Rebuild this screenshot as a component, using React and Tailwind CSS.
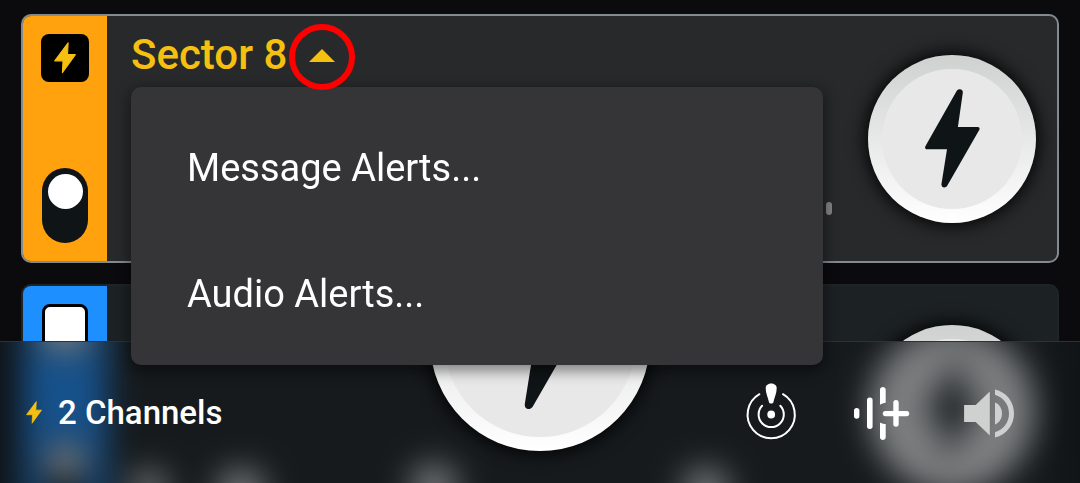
import React, { useState } from 'react';
import clsx from 'clsx';

const BoltIcon = ({ className }) => (
  <svg viewBox="0 0 21 30" className={className} fill="currentColor" stroke="currentColor" strokeWidth="1" strokeLinejoin="round" aria-hidden="true">
    <path d="M13.5 .8 L12.9 12 H20.4 L8 29.2 L8.6 18 H0.7 Z" />
  </svg>
);

const TalkBolt = ({ className }) => (
  <svg viewBox="0 0 55 99" className={className} fill="currentColor" aria-hidden="true">
    <path d="M31.5 2.2 C33.2 -.6 38.2 -.5 37.8 3.8 L32.9 38 H52.8 C54.6 38 55 39.6 54.2 41 L22.5 96.2 C20.8 99.6 16 99.2 16.5 94.8 L22 60.2 H2 C.2 60.2 -.4 58.6 .5 57 Z" />
  </svg>
);

const LocateIcon = () => (
  <svg viewBox="0 0 56 56" className="size-14 overflow-visible" fill="none" stroke="currentColor" strokeWidth="2" strokeLinecap="round" aria-hidden="true">
    <path d="M14.4 10.2 A23.6 23.6 0 1 0 38 10.2" />
    <path d="M17.1 21.8 A12.6 12.6 0 1 0 35.3 21.8" />
    <circle cx="26.2" cy="30.5" r="3.9" fill="currentColor" stroke="none" />
    <path stroke="none" fill="currentColor" d="M20.7 4.2 C20.7 -2 31.7 -2 31.7 4.2 C31.7 9 29.3 14 28.3 18.4 C28 19.8 24.4 19.8 24.1 18.4 C23.1 14 20.7 9 20.7 4.2 Z" />
  </svg>
);

const AddStreamIcon = () => (
  <svg viewBox="0 0 56 56" className="size-14" fill="currentColor" aria-hidden="true">
    <rect x="0" y="24" width="5.4" height="10.8" rx="2.7" />
    <rect x="13" y="13.6" width="5.6" height="31.4" rx="2.7" />
    <path d="M26 5.8 C26 2.2 31.7 2.2 31.7 5.8 V18.8 C29.4 19 27.8 19.6 26 20.8 Z" />
    <path d="M26 38.4 C27.8 39.4 29.4 39.8 31.7 40 V53.2 C31.7 56.9 26 56.9 26 53.2 Z" />
    <rect x="28.8" y="27" width="26.4" height="5.2" rx="2.6" />
    <rect x="39.3" y="16" width="5.4" height="26.8" rx="2.7" />
  </svg>
);

const VolumeIcon = () => (
  <svg viewBox="0 0 56 56" className="size-14" fill="currentColor" aria-hidden="true">
    <path d="M1.1 21 H12.7 L26.8 7.6 V51.4 L12.7 38 H1.1 Z" />
    <path d="M32 18.6 C36.6 20.4 39 24.8 39 29.6 C39 34.4 36.6 38.6 32 40.6 Z" />
    <path d="M32 5.6 C43.4 8 51 18 51 29.5 C51 41 43.4 51 32 53.4 V48.2 C40.4 45.8 46 38.4 46 29.5 C46 20.6 40.4 13.2 32 10.8 Z" />
  </svg>
);

// level dots under the second channel's name
const LEVELS = [
  { cx: 18, cy: 30, r: 19 },
  { cx: 110, cy: 34, r: 25 },
  { cx: 303, cy: 28, r: 24 },
  { cx: 575, cy: 32, r: 24 },
];

function TalkButton({ large = false, label })
{
  return (
    <button
      aria-label={label}
      className={clsx(
        'shrink-0 rounded-full bg-linear-to-b from-[#cfd1d0] to-white p-[14px] shadow-[0_0_18px_2px_#000000]',
        large ? 'size-[220px]' : 'size-[168px]'
      )}
    >
      <span className="flex size-full items-center justify-center rounded-full bg-[#e8e8e8] text-[#0f1416]">
        <TalkBolt className={large ? 'w-[76px]' : 'w-[55px]'} />
      </span>
    </button>
  );
}

function Toggle({ label })
{
  return (
    <label className="block h-[75px] w-[46px] rounded-full bg-[#0f1416] pt-[6px]">
      <input type="checkbox" defaultChecked aria-label={label} className="mx-auto block size-[35px] appearance-none rounded-full bg-white" />
    </label>
  );
}

function AlertsMenu()
{
  return (
    <div role="menu" className="absolute top-[71px] right-[9px] left-0 z-20 rounded-[10px] bg-[#353537] pt-[18px] pb-2 shadow-[0_4px_14px_2px_rgba(0,0,0,0.45)]">
      {['Message Alerts...', 'Audio Alerts...'].map((item) => (
        <button key={item} role="menuitem" className="block h-[126px] w-full px-14 text-left text-[38px] text-white">
          {item}
        </button>
      ))}
    </div>
  );
}

function SecondChannel()
{
  return (
    <section className="flex h-[249px] rounded-[10px] border-2 border-[#1f2527] bg-[#1c2123] pr-[21px]">
      <div className="flex w-[84px] shrink-0 flex-col items-center justify-between rounded-l-lg bg-[#1e8fff] pt-[18px] pb-[18px]">
        <div className="h-12 w-[46px] rounded-lg border-3 border-black bg-white" />
        <Toggle label="Channel 2" />
      </div>

      <div className="ml-6 flex flex-1 flex-col justify-end pb-3">
        <svg className="h-[60px] w-full" fill="#dcdcdc" aria-hidden="true">
          {LEVELS.map((dot) => <circle key={dot.cx} {...dot} />)}
        </svg>
      </div>

      <div className="ml-9 flex items-center">
        <TalkButton label="Talk on channel 2" />
      </div>
    </section>
  );
}

export default function App()
{
  const [open, setOpen] = useState(true);

  return (
    <div className="relative h-screen overflow-hidden bg-[#0b0b0e] font-['Roboto',sans-serif]">
      <main className="flex flex-col gap-[21px] px-[21px] pt-[14px]">
        <section className="flex h-[249px] rounded-[10px] border-2 border-[#848b90] bg-[#28292b] pr-[21px]">
          <div className="flex w-[84px] shrink-0 flex-col items-center justify-between rounded-l-lg bg-[#ffa20d] pt-[18px] pb-[18px]">
            <div className="flex size-12 items-center justify-center rounded-lg bg-black text-[#f6c011]">
              <BoltIcon className="w-[22px]" />
            </div>
            <Toggle label="Sector 8" />
          </div>

          <div className="relative ml-6 flex-1">
            <button
              onClick={() => setOpen(!open)}
              aria-expanded={open}
              className="mt-2 flex items-center text-[42px] leading-none font-medium text-[#f6c011]"
            >
              <span className="w-[158px] pb-1 text-left whitespace-nowrap">Sector 8</span>
              <span className="relative z-30 flex size-[66px] items-center justify-center rounded-full border-[6px] border-[#fe0000] pb-1">
                <svg viewBox="0 0 26 13" className="w-[26px]" fill="currentColor" aria-hidden="true">
                  <path d="M0 13 L13 0 L26 13 Z" />
                </svg>
              </span>
            </button>
            {open && <AlertsMenu />}
            <span className="absolute right-0 bottom-[46px] h-[13px] w-[6px] rounded-sm bg-[#858587]" />
          </div>

          <div className="ml-9 flex items-center">
            <TalkButton label="Talk on Sector 8" />
          </div>
        </section>

        <SecondChannel />
      </main>

      <footer className="fixed inset-x-0 bottom-0 z-10 flex h-[142px] items-center border-t border-[#2e3234] bg-[#101417] pr-[61px] pl-[26px]">
        {/* frosted copy of the channel that runs under the bar */}
        <div inert aria-hidden="true" className="absolute inset-0 overflow-hidden">
          <div className="-mt-[58px] px-[21px] opacity-50 blur-[16px]">
            <SecondChannel />
          </div>
        </div>

        <BoltIcon className="relative mr-4 w-4 text-[#f6c011]" />
        <span className="relative text-[33px] font-medium text-white">2 Channels</span>

        {/* main talk button sits half over the bar */}
        <div className="absolute -top-[111px] left-1/2 -translate-x-1/2">
          <TalkButton large label="Talk on all channels" />
        </div>

        <div className="relative ml-auto flex gap-[53px] pb-0.5 text-white">
          <button aria-label="Locate"><LocateIcon /></button>
          <button aria-label="Add stream"><AddStreamIcon /></button>
          <button aria-label="Volume" className="text-[#cfd1d0]"><VolumeIcon /></button>
        </div>
      </footer>
    </div>
  );
}
